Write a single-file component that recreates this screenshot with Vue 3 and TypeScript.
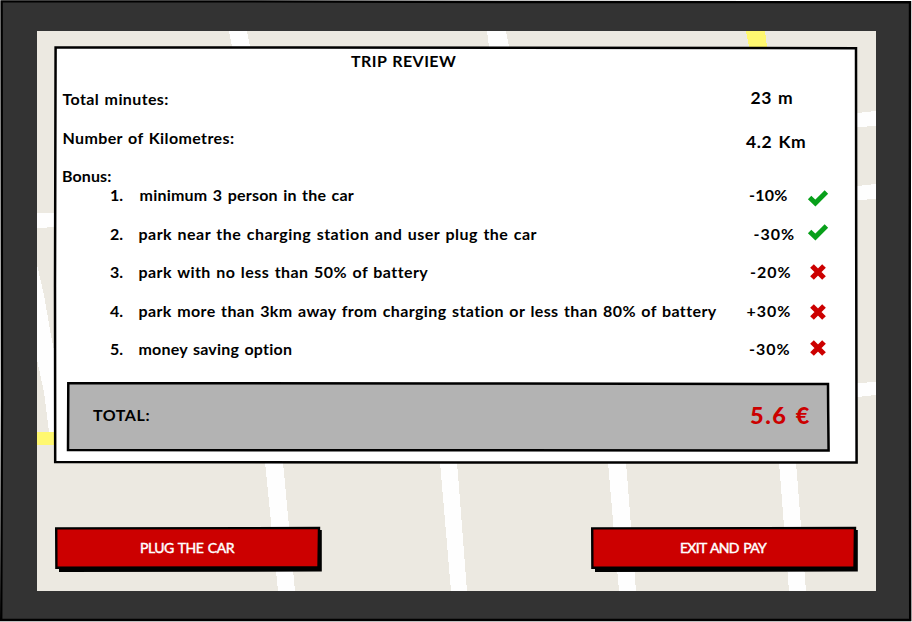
<script setup lang="ts">
interface Bonus {
  text: string
  value: string
  earned: boolean
}

const bonuses: Bonus[] = [
  { text: 'minimum 3 person in the car', value: '-10%', earned: true },
  { text: 'park near the charging station and user plug the car', value: '-30%', earned: true },
  { text: 'park with no less than 50% of battery', value: '-20%', earned: false },
  { text: 'park more than 3km away from charging station or less than 80% of battery', value: '+30%', earned: false },
  { text: 'money saving option', value: '-30%', earned: false },
]

const actions: string[] = ['PLUG THE CAR', 'EXIT AND PAY']
</script>

<template>
  <div class="device">
    <svg class="outline" viewBox="0 0 912 622">
      <path d="M0 0H912V622H0ZM1.6 1.2L250 1L500 2L910.2 2.2L910 300L910.5 620L500 620.4L1 619.8L2 400Z" fill="#fff" fill-rule="evenodd" />
      <path d="M1.6 1.4L250 1.4L500 2L910 2.2L909.7 300L910.2 620L500 620L1.2 620L2 400Z" fill="none" stroke="#000" stroke-width="2.4" />
    </svg>
    <main class="screen">
      <svg class="map" viewBox="37 31 839 560">
        <g fill="#fefefe">
          <path d="M229 31H247L250 47H232Z" />
          <path d="M487 31H506L509 47H489Z" />
          <path d="M857 113L876 111V126L857 127Z" />
          <path d="M857 186L876 184V199L857 200Z" />
          <path d="M857 383L876 382V395L857 397Z" />
          <path d="M37 213H56V227L37 228Z" />
          <path d="M37 265L44 295L50 330L54 350V432H49L44 392L37 360Z" />
          <path d="M265 462H283L295 591H278Z" />
          <path d="M440 462H457L467 591H451Z" />
          <path d="M608 462H626L636 591H619Z" />
          <path d="M779 462H796L806 591H789Z" />
        </g>
        <g fill="#fff870">
          <path d="M746 31H765L767 47H749Z" />
          <path d="M37 432H56V445H37Z" />
        </g>
      </svg>

      <section class="card">
        <svg class="outline" viewBox="0 0 802 416">
          <path d="M.6 .5L240 .6L801 1.2L801.2 200L801.6 415.6L400 415.5L.2 415L0 240Z" fill="none" stroke="#000" stroke-width="2.5" />
        </svg>
        <h1>TRIP REVIEW</h1>
        <dl class="summary">
          <div class="stat minutes"><dt>Total minutes:</dt><dd>23 m</dd></div>
          <div class="stat distance"><dt>Number of Kilometres:</dt><dd>4.2 Km</dd></div>
        </dl>
        <h2>Bonus:</h2>
        <ol class="bonuses">
          <li v-for="(b, i) in bonuses" :key="i">
            <span class="num">{{ i + 1 }}.</span>
            <span class="text">{{ b.text }}</span>
            <span class="value">{{ b.value }}</span>
            <svg v-if="b.earned" class="icon" viewBox="0 0 22 18">
              <path d="M2.6 8.4L8.4 14L19.4 3" fill="none" stroke="#08a01a" stroke-width="4.9" />
            </svg>
            <svg v-else class="icon" viewBox="0 0 22 18">
              <path d="M5 3L17 15M17 3L5 15" fill="none" stroke="#c00" stroke-width="5.2" />
            </svg>
          </li>
        </ol>
        <div class="total">
          <svg class="outline" viewBox="0 0 762 70">
            <path d="M1.3 1.2L380 1.4L761 2L761.2 30L761.6 68.6L380 68.3L1 68Z" fill="#b3b3b3" stroke="#000" stroke-width="2.5" />
          </svg>
          <span class="total-label">TOTAL:</span>
          <strong>5.6 €</strong>
        </div>
      </section>

      <nav class="actions">
        <button v-for="label in actions" :key="label" type="button">
          <svg class="outline" viewBox="0 0 267 45">
            <path d="M4 4L266.8 3V44.5L4 45Z" />
            <path d="M1.2 1.4L264 1L263.5 40.5L1.4 40.8Z" fill="#c00" stroke="#000" stroke-width="2.4" />
          </svg>
          <span>{{ label }}</span>
        </button>
      </nav>
    </main>
  </div>
</template>

<style>
body {
  margin: 0;
  background: #fff;
}
</style>

<style scoped>
.device {
  position: relative;
  box-sizing: border-box;
  width: 912px;
  height: 622px;
  padding: 31px 36px 31px 37px;
  background: #333;
  color: #000;
  font: 700 16px/20px Lato, "Open Sans", sans-serif;
  word-spacing: 1.2px;
}
.outline {
  position: absolute;
  inset: 0;
  width: 100%;
  height: 100%;
  overflow: visible;
}
.screen {
  position: relative;
  box-sizing: border-box;
  height: 560px;
  padding: 16px 18px 0;
  background: #ece9e1;
}
.map {
  position: absolute;
  inset: 0;
  width: 100%;
  height: 100%;
  shape-rendering: crispEdges;
}
.card {
  position: relative;
  box-sizing: border-box;
  width: 802px;
  height: 416px;
  background: #fff;
}
h1, h2, dl, dd, ol {
  margin: 0;
  padding: 0;
  font-size: 16px;
}
h1, h2, dl, ol, .total > span, .total > strong, button > span {
  position: relative;
}
h1 {
  padding-left: 296px;
  line-height: 28px;
  letter-spacing: .42px;
}
.stat {
  display: flex;
  align-items: center;
  padding-left: 7.5px;
}
.stat dt {
  width: 683px;
  letter-spacing: .38px;
}
.stat dd {
  font-size: 17.5px;
  letter-spacing: .6px;
}
.minutes {
  height: 48px;
}
.minutes dd {
  margin: 0 0 3px 5px;
}
.distance {
  height: 30px;
}
.distance dd {
  margin: 7px 0 0 .6px;
}
h2 {
  padding: 13px 0 0 7px;
  line-height: 19px;
  letter-spacing: .1px;
}
.bonuses {
  display: grid;
  gap: 18.5px;
  padding-left: 55px;
  list-style: none;
}
.bonuses li {
  display: grid;
  grid-template: 20px / 28.5px 610.5px 58px 22px;
  align-items: center;
  height: 20px;
}
.text {
  white-space: nowrap;
  letter-spacing: .38px;
}
.value {
  letter-spacing: 1px;
}
.icon {
  width: 22px;
  height: 18px;
}
li:nth-child(1) .text { padding-left: 1px; letter-spacing: .23px; }
li:nth-child(2) .text { letter-spacing: .46px; }
li:nth-child(3) .text { letter-spacing: .43px; }
li:nth-child(5) .text { letter-spacing: .22px; }
li:nth-child(1) .value { letter-spacing: .2px; }
li:nth-child(2) .value { padding-left: 4.5px; }
li:nth-child(3) .value { padding-left: 1px; }
li:nth-child(4) .value { margin-left: -2.5px; }
li:nth-child(1) .icon { margin-top: 5px; }
li:nth-child(2) .icon { margin-top: -4px; }
li:nth-child(4) .icon { margin-top: 2px; }
li:nth-child(5) .icon { margin-top: -2px; }
.total {
  position: relative;
  display: flex;
  align-items: center;
  box-sizing: border-box;
  width: 762px;
  height: 70px;
  margin: 23px 0 0 12px;
  padding: 0 0 4px 26px;
}
.total-label {
  width: 657px;
  letter-spacing: .55px;
}
.total strong {
  color: #c00;
  font-size: 23.5px;
  letter-spacing: 1.5px;
}
.actions {
  display: flex;
  justify-content: space-between;
  margin-top: 64px;
}
button {
  position: relative;
  width: 267px;
  height: 45px;
  padding: 0 3px 3px 0;
  border: 0;
  background: none;
  color: #fff;
  font: 400 14px/20px Lato, "Open Sans", sans-serif;
  -webkit-text-stroke: .45px #fff;
  letter-spacing: -.45px;
  word-spacing: 1.2px;
}
button:last-child {
  letter-spacing: -.7px;
  word-spacing: 1.6px;
}
</style>
